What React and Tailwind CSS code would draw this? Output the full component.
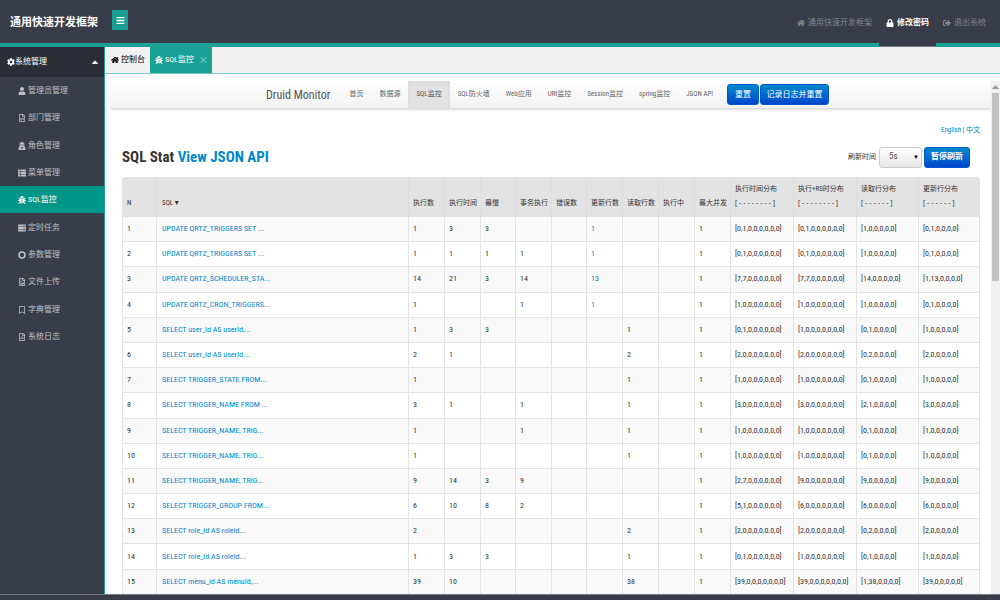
import { FaBars, FaBug, FaCaretUp, FaCog, FaHome, FaLock, FaRegBookmark, FaRegFileAlt, FaRegFileCode, FaRegFileImage, FaServer, FaSignOutAlt, FaThList, FaUser, FaUserSecret } from "react-icons/fa";

function RingIcon() {
  return (
    <svg viewBox="0 0 16 16" className="h-[8px] w-[8px]" fill="none" stroke="currentColor" strokeWidth="3">
      <circle cx="8" cy="8" r="6" />
    </svg>
  );
}

const menus = [
  { icon: FaUser, label: "管理员管理" },
  { icon: FaRegFileCode, label: "部门管理" },
  { icon: FaUserSecret, label: "角色管理" },
  { icon: FaThList, label: "菜单管理" },
  { icon: FaBug, label: "SQL监控", active: true },
  { icon: FaServer, label: "定时任务" },
  { icon: RingIcon, label: "参数管理" },
  { icon: FaRegFileImage, label: "文件上传" },
  { icon: FaRegBookmark, label: "字典管理" },
  { icon: FaRegFileAlt, label: "系统日志" },
];

const navs = ["首页", "数据源", "SQL监控", "SQL防火墙", "Web应用", "URI监控", "Session监控", "spring监控", "JSON API"];

const counters = [
  ["执行数", "w-[36px]"],
  ["执行时间", "w-[36px]"],
  ["最慢", "w-[35px]"],
  ["事务执行", "w-[36px]"],
  ["错误数", "w-[35px]"],
  ["更新行数", "w-[36px]"],
  ["读取行数", "w-[36px]"],
  ["执行中", "w-[36px]"],
  ["最大并发", "w-[36px]"],
];

const histograms = [
  ["执行时间分布", "[ - - - - - - - - ]", "w-[63px]"],
  ["执行+RS时分布", "[ - - - - - - - - ]", "w-[63px]"],
  ["读取行分布", "[ - - - - - - ]", "w-[62px]"],
  ["更新行分布", "[ - - - - - - ]", "w-[62px]"],
];

const rows = [
  ["UPDATE QRTZ_TRIGGERS SET ...", [1, 3, 3, "", "", 1, "", "", 1], ["0,1", "0,1", "1,0", "0,1"]],
  ["UPDATE QRTZ_TRIGGERS SET ...", [1, 1, 1, 1, "", 1, "", "", 1], ["0,1", "0,1", "1,0", "0,1"]],
  ["UPDATE QRTZ_SCHEDULER_STA...", [14, 21, 3, 14, "", 13, "", "", 1], ["7,7", "7,7", "14,0", "1,13"]],
  ["UPDATE QRTZ_CRON_TRIGGERS...", [1, "", "", 1, "", 1, "", "", 1], ["1,0", "1,0", "1,0", "0,1"]],
  ["SELECT user_id AS userId,...", [1, 3, 3, "", "", "", 1, "", 1], ["0,1", "1,0", "0,1", "1,0"]],
  ["SELECT user_id AS userId...", [2, 1, "", "", "", "", 2, "", 1], ["2,0", "2,0", "0,2", "2,0"]],
  ["SELECT TRIGGER_STATE FROM...", [1, "", "", "", "", "", 1, "", 1], ["1,0", "1,0", "0,1", "1,0"]],
  ["SELECT TRIGGER_NAME FROM ...", [3, 1, "", 1, "", "", 1, "", 1], ["3,0", "3,0", "2,1", "3,0"]],
  ["SELECT TRIGGER_NAME, TRIG...", [1, "", "", 1, "", "", 1, "", 1], ["1,0", "1,0", "0,1", "1,0"]],
  ["SELECT TRIGGER_NAME, TRIG...", [1, "", "", "", "", "", 1, "", 1], ["1,0", "1,0", "0,1", "1,0"]],
  ["SELECT TRIGGER_NAME, TRIG...", [9, 14, 3, 9, "", "", "", "", 1], ["2,7", "9,0", "9,0", "9,0"]],
  ["SELECT TRIGGER_GROUP FROM...", [6, 10, 8, 2, "", "", "", "", 1], ["5,1", "6,0", "6,0", "6,0"]],
  ["SELECT role_id AS roleId...", [2, "", "", "", "", "", 2, "", 1], ["2,0", "2,0", "0,2", "2,0"]],
  ["SELECT role_id AS roleId...", [1, 3, 3, "", "", "", 1, "", 1], ["0,1", "1,0", "0,1", "1,0"]],
  ["SELECT menu_id AS menuId,...", [39, 10, "", "", "", "", 38, "", 1], ["39,0", "39,0", "1,38", "39,0"]],
];

// 前两列为执行时间分布（8 段），后两列为行数分布（6 段）
const tails = [",0,0,0,0,0,0]", ",0,0,0,0,0,0]", ",0,0,0,0]", ",0,0,0,0]"];

function Header() {
  return (
    <header className="flex h-[47px] shrink-0 items-stretch border-b-4 border-[#1aa094] bg-[#393d49]">
      <h1 className="self-center pl-[10px] pt-1 text-[11px] font-bold text-white">通用快速开发框架</h1>
      <button
        type="button"
        aria-label="菜单"
        className="ml-[14px] mt-[10px] flex h-[20px] w-[16px] items-center justify-center bg-[#1aa094] text-[9px] text-white"
      >
        <FaBars />
      </button>
      <nav className="ml-auto flex pr-[7px] text-[8px] text-[#85868c]">
        <a href="#home" className="flex items-center gap-[3px] px-[7px] pt-[3px]">
          <FaHome />
          通用快速开发框架
        </a>
        <a href="#password" className="-mb-1 flex items-center gap-[3px] border-b border-[#777a82] bg-[#393d49] px-[7px] font-bold text-white">
          <FaLock />
          修改密码
        </a>
        <a href="#logout" className="flex items-center gap-[3px] px-[7px] pt-[3px]">
          <FaSignOutAlt />
          退出系统
        </a>
      </nav>
    </header>
  );
}

function Sidebar() {
  return (
    <aside className="w-[105px] shrink-0 border-r border-[#1aa094] bg-[#393d49] text-[8px]">
      <button type="button" className="flex h-[30px] w-full items-center bg-[#2b2e37] pl-[7px] pr-[4px] text-white">
        <FaCog />
        <span>系统管理</span>
        <FaCaretUp className="ml-auto text-[10px]" />
      </button>
      <ul className="grid h-[273px] grid-rows-10">
        {menus.map(({ icon: Icon, label, active }) => (
          <li key={label} className="grid">
            <a
              href="#menu"
              className={`flex items-center gap-[2px] pl-[18px] pt-px ${active ? "bg-[#009688] text-white" : "text-[#c0c1c5]"}`}
            >
              <Icon />
              {label}
            </a>
          </li>
        ))}
      </ul>
    </aside>
  );
}

function Tabs() {
  return (
    <div className="flex h-[27px] shrink-0 border-b border-[#7fcbc3] bg-[#f1f1f1] text-[8px]">
      <a href="#console" className="flex w-[45px] items-center gap-[2px] pl-[6px] text-black">
        <FaHome />
        控制台
      </a>
      <div className="flex w-[62px] items-center bg-[#1aa094] pl-[5px] text-white">
        <a href="#sql" className="flex items-center gap-[2px]">
          <FaBug />
          SQL监控
        </a>
        <button type="button" aria-label="关闭" className="ml-auto mr-[5px]">
          <svg viewBox="0 0 8 8" className="h-[8px] w-[7px]" stroke="#b5dfdb" fill="none">
            <path d="M1 1l6 6M7 1l-6 6" />
          </svg>
        </button>
      </div>
    </div>
  );
}

function BlueButton({ children, className }) {
  return (
    <button
      type="button"
      className={`h-[21px] whitespace-nowrap rounded-[3px] border border-[#0059cc] bg-linear-to-b from-[#0088cc] to-[#0044cc] text-[8px] text-white ${className}`}
    >
      {children}
    </button>
  );
}

function DruidNav() {
  return (
    <nav className="ml-[6px] flex h-[28px] items-stretch justify-center border-b border-[#dddddd] bg-linear-to-b from-white to-[#f2f2f2] pr-[7px] text-[7px] text-[#666666] shadow-sm">
      <a href="#druid" className="mr-[11px] self-center text-[12px] text-[#555555]">
        Druid Monitor
      </a>
      {navs.map((item) => (
        <a
          key={item}
          href="#nav"
          className={`flex items-center whitespace-nowrap px-2 ${
            item === "SQL监控" ? "bg-[#e3e3e3] text-[#555555] shadow-inner" : ""
          }`}
        >
          {item}
        </a>
      ))}
      <BlueButton className="ml-[6px] w-[32px] self-center">重置</BlueButton>
      <BlueButton className="ml-[1px] w-[69px] self-center">记录日志并重置</BlueButton>
    </nav>
  );
}

function SqlTable() {
  return (
    <table className="w-full table-fixed border-separate border-spacing-0 overflow-hidden rounded-t-[3px] text-left text-[8px] text-[#333333]">
      <colgroup>
        <col className="w-[34px]" />
        <col />
        {counters.map(([name, width]) => (
          <col key={name} className={width} />
        ))}
        {histograms.map(([name, , width]) => (
          <col key={name} className={width} />
        ))}
      </colgroup>
      <thead className="bg-[#e3e3e3] align-bottom text-[7px]">
        <tr className="h-[39px]">
          <th className="pb-2 pl-[5px] font-normal">N</th>
          <th className="border-l border-[#dddddd] pb-2 pl-[5px] font-normal">
            SQL<span className="font-['Liberation_Sans',sans-serif]">▼</span>
          </th>
          {counters.map(([name]) => (
            <th key={name} className="whitespace-nowrap border-l border-[#dddddd] pb-2 pl-1 font-normal">
              {name}
            </th>
          ))}
          {histograms.map(([name, scale]) => (
            <th key={name} className="whitespace-nowrap border-l border-[#dddddd] pb-[6px] pl-1 font-normal leading-[14px]">
              {name}
              <br />
              <span className="font-['Liberation_Sans',sans-serif]">{scale}</span>
            </th>
          ))}
        </tr>
      </thead>
      <tbody className="h-[378px]">
        {rows.map(([sql, counts, dist], i) => (
          <tr key={i} className="h-[25px] odd:bg-[#f9f9f9]">
            <td className="border-l border-t border-[#e3e3e3] pl-1">{i + 1}</td>
            <td className="border-l border-t border-[#e3e3e3] pl-[5px]">
              <a href="#sql" className="text-[#0088cc]">
                {sql}
              </a>
            </td>
            {counts.map((value, n) => (
              <td key={n} className="border-l border-t border-[#e3e3e3] pl-1">
                {n === 5 && value ? (
                  <a href="#update" className="text-[#2277aa]">
                    {value}
                  </a>
                ) : (
                  value
                )}
              </td>
            ))}
            {dist.map((head, n) => (
              <td key={n} className="whitespace-nowrap border-l border-t border-[#e3e3e3] pl-1 last:border-r">
                {"[" + head + tails[n]}
              </td>
            ))}
          </tr>
        ))}
      </tbody>
    </table>
  );
}

function Scrollbar() {
  return (
    <div className="flex w-[9px] shrink-0 flex-col items-center bg-[#f1f1f1]">
      <FaCaretUp className="h-[12px] text-[7px] text-[#999999]" />
      <div className="h-[188px] w-[7px] bg-[#c1c1c1]" />
    </div>
  );
}

export default function App() {
  return (
    <div className="flex h-screen flex-col overflow-hidden bg-white font-['Roboto_Condensed','Liberation_Sans','Noto_Sans_CJK_SC',sans-serif]">
      <Header />
      <div className="flex min-h-0 flex-1">
        <Sidebar />
        <main className="flex min-w-0 flex-1 flex-col">
          <Tabs />
          <div className="mt-[7px] flex min-h-0 flex-1">
            <div className="min-w-0 flex-1 overflow-hidden">
              <DruidNav />
              <div className="pl-[17px] pr-[11px]">
                <div className="mt-4 text-right text-[7px] leading-[10px] text-[#444444]">
                  <a href="#en" className="text-[#0088cc]">English</a> |{" "}
                  <a href="#zh" className="text-[#0088cc]">中文</a>
                </div>
                <div className="mb-[9px] mt-[11px] flex h-[22px] items-center">
                  <h2 className="text-[15px] font-bold text-[#333333]">
                    SQL Stat{" "}
                    <a href="#json" className="text-[#0088cc]">View JSON API</a>
                  </h2>
                  <label htmlFor="refresh" className="ml-auto mr-[3px] text-[7px] text-[#333333]">刷新时间</label>
                  <div className="relative flex">
                    <select
                      id="refresh"
                      defaultValue="5s"
                      className="h-[21px] w-[43px] appearance-none rounded-[3px] border border-[#cccccc] bg-linear-to-b from-white to-[#e6e6e6] pl-[9px] text-[9px] text-[#555555]"
                    >
                      <option>5s</option>
                      <option>10s</option>
                      <option>20s</option>
                    </select>
                    <span className="pointer-events-none absolute right-[3px] top-[6px] font-['Liberation_Sans',sans-serif] text-[6px] leading-[8px] text-black">▼</span>
                  </div>
                  <BlueButton className="ml-[2px] mr-[10px] w-[46px] font-bold">暂停刷新</BlueButton>
                </div>
                <SqlTable />
              </div>
            </div>
            <Scrollbar />
          </div>
        </main>
      </div>
      <footer className="h-[6px] shrink-0 border-t border-[#777a82] bg-[#393d49]" />
    </div>
  );
}
